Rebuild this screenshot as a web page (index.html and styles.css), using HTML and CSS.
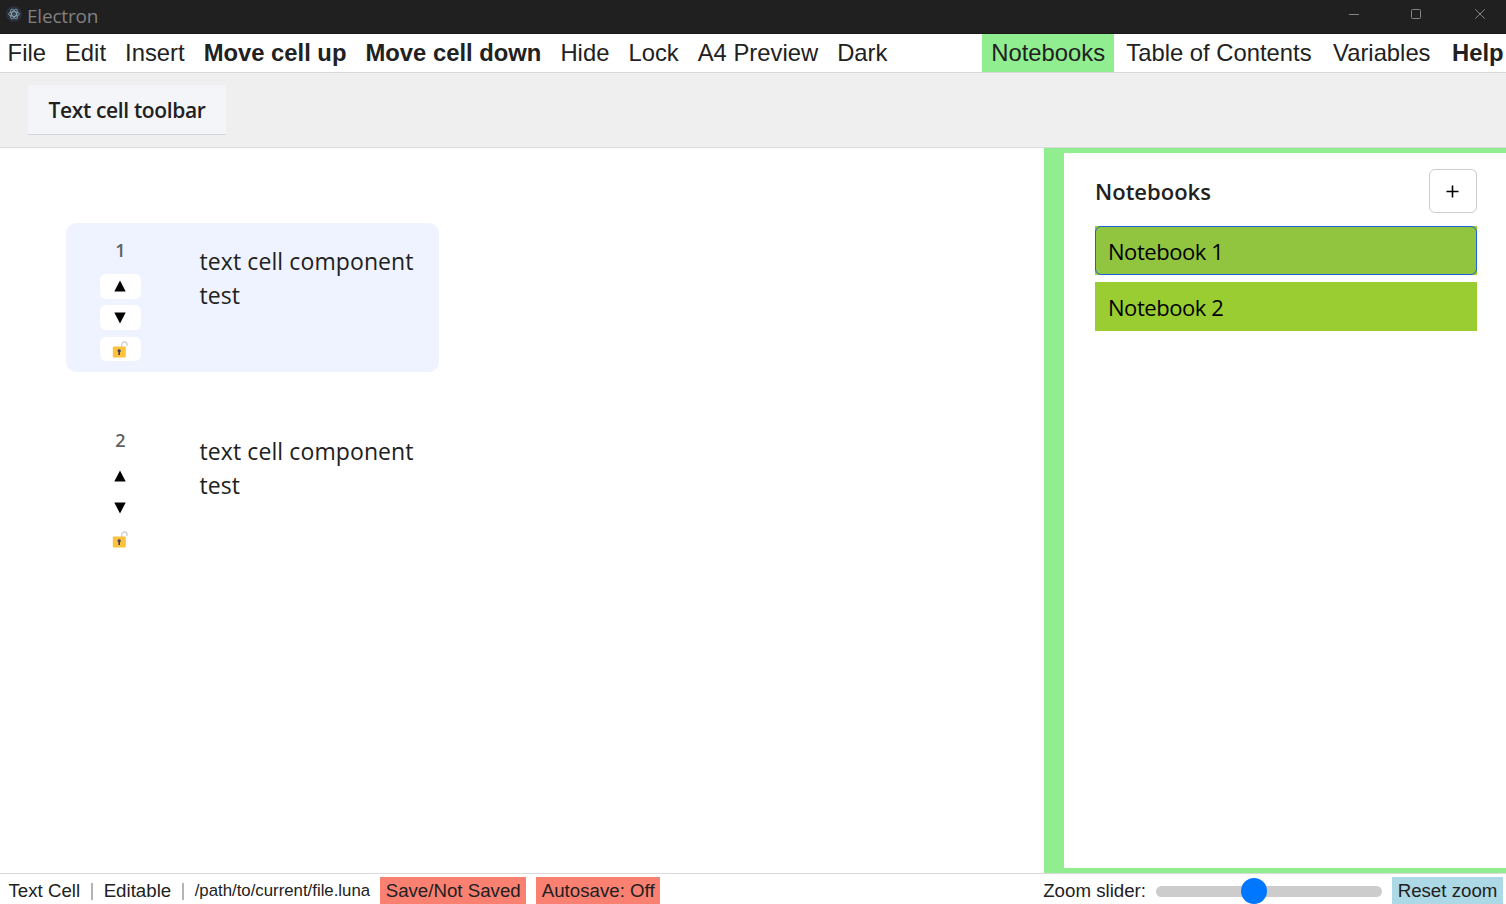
FILE: index.html
```html
<!DOCTYPE html>
<html lang="en">
<head>
<meta charset="utf-8">
<title>Electron</title>
<link rel="stylesheet" href="styles.css">
</head>
<body>
<div class="app">
  <header class="titlebar">
    <svg class="logo" width="16" height="16" viewBox="0 0 16 16">
      <circle cx="8" cy="8" r="8" fill="#2b2e3b"/>
      <g fill="none" stroke="#9fc3cf" stroke-width=".7">
        <ellipse cx="8" cy="8" rx="5.400" ry="2.300"/>
        <ellipse cx="8" cy="8" rx="5.400" ry="2.300" transform="rotate(60 8 8)"/>
        <ellipse cx="8" cy="8" rx="5.400" ry="2.300" transform="rotate(120 8 8)"/>
      </g>
      <circle cx="8" cy="8" r=".5" fill="#9fc3cf"/>
    </svg>
    <span class="app-name">Electron</span>
    <div class="window-controls">
      <svg width="11" height="11" viewBox="0 0 11 11"><path d="M0 5.500h10"/></svg>
      <svg class="maximize" width="11" height="11" viewBox="0 0 11 11"><rect x=".5" y=".5" width="9" height="9" rx="1"/></svg>
      <svg width="11" height="11" viewBox="0 0 11 11"><path d="M.2.2l9.600 9.600M9.800.2L.2 9.800"/></svg>
    </div>
  </header>
  <nav class="menubar">
    <div class="menu-left">
      <span>File</span><span>Edit</span><span>Insert</span><b>Move cell up</b><b>Move cell down</b><span>Hide</span><span>Lock</span><span>A4 Preview</span><span>Dark</span>
    </div>
    <div class="menu-right">
      <span class="active">Notebooks</span><span>Table of Contents</span><span>Variables</span><b>Help</b>
    </div>
  </nav>
  <div class="toolbar"><div class="toolbar-tab"><span>Text cell toolbar</span></div></div>
  <main class="workspace">
    <section class="document">
      <article class="cell selected">
        <div class="cell-controls">
          <span class="cell-number">1</span>
          <button><svg width="12" height="12" viewBox="0 0 12 12"><path d="M6 .5L11.7 11.5H.3z"/></svg></button>
          <button class="down"><svg width="12" height="12" viewBox="0 0 12 12"><path d="M6 11.5L11.7.5H.3z"/></svg></button>
          <button class="lock"><svg width="16" height="17" viewBox="0 0 16 17"><path d="M9.8 6V3.6a2.6 2.6 0 0 1 5.2 0V5" fill="none" stroke="#cfcfcf" stroke-width="1.3"/><rect x=".8" y="5.6" width="13" height="11" rx="1" fill="#fcc23c"/><path d="M7.2 8.2a1.6 1.6 0 0 1 .8 3V14H6.400v-2.800a1.600 1.600 0 0 1 .8-3z" fill="#433b6b"/></svg></button>
        </div>
        <p class="cell-text">text cell component<br>test</p>
      </article>
      <article class="cell">
        <div class="cell-controls">
          <span class="cell-number">2</span>
          <button><svg width="12" height="12" viewBox="0 0 12 12"><path d="M6 .5L11.7 11.5H.3z"/></svg></button>
          <button class="down"><svg width="12" height="12" viewBox="0 0 12 12"><path d="M6 11.5L11.7.5H.3z"/></svg></button>
          <button class="lock"><svg width="16" height="17" viewBox="0 0 16 17"><path d="M9.8 6V3.6a2.6 2.6 0 0 1 5.2 0V5" fill="none" stroke="#cfcfcf" stroke-width="1.3"/><rect x=".8" y="5.6" width="13" height="11" rx="1" fill="#fcc23c"/><path d="M7.2 8.2a1.6 1.6 0 0 1 .8 3V14H6.400v-2.800a1.600 1.600 0 0 1 .8-3z" fill="#433b6b"/></svg></button>
        </div>
        <p class="cell-text">text cell component<br>test</p>
      </article>
    </section>
    <aside class="sidebar">
      <div class="sidebar-head">
        <h2>Notebooks</h2>
        <button class="add"><svg width="13" height="13" viewBox="0 0 13 13"><path d="M6.500.5v12M.5 6.500h12" stroke="#000" stroke-width="1.600"/></svg></button>
      </div>
      <div class="notebook"><div class="notebook-label current">Notebook 1</div></div>
      <div class="notebook"><div class="notebook-label">Notebook 2</div></div>
    </aside>
  </main>
  <footer class="statusbar">
    <span>Text Cell</span><i class="sep"></i><span>Editable</span><i class="sep"></i><span class="path">/path/to/current/file.luna</span>
    <span class="badge save">Save/Not Saved</span><span class="badge autosave">Autosave: Off</span>
    <div class="zoom">
      <span class="zoom-label">Zoom slider:</span>
      <div class="track"><div class="thumb"></div></div>
      <span class="badge reset">Reset zoom</span>
    </div>
  </footer>
</div>
</body>
</html>
```
FILE: styles.css
```css
* { box-sizing: border-box; }
body { margin: 0; color: #212121; background: #fff; font-family: "Liberation Sans", Arial, sans-serif; }
button { border: 0; padding: 0; font: inherit; }
svg { display: block; flex: none; }
.app { width: 1506px; height: 904px; display: flex; flex-direction: column; overflow: hidden; }

.titlebar { height: 34px; flex: none; display: flex; align-items: flex-start; background: #202020; padding: 6px 20px 0 6px; border-bottom: 1px solid #191919; }
.app-name { margin: -3px 0 0 5px; font: 19px/26px "Open Sans", "Noto Sans", sans-serif; letter-spacing: -.2px; color: #808080; }
.window-controls { display: flex; margin: 3px 0 0 auto; gap: 52px; }
.window-controls svg { fill: none; stroke: #858585; stroke-width: 1; }
.window-controls .maximize { margin: 0 1px 0 -1px; }

.menubar { height: 39px; flex: none; display: flex; justify-content: space-between; border-bottom: 1px solid #dadada; font-size: 23.800px; line-height: 38px; white-space: nowrap; }
.menu-left { display: flex; gap: 19.050px; padding-left: 7.600px; }
.menu-right { display: flex; gap: 21.500px; padding-right: 2.400px; }
.active { background: #90ee90; padding: 0 9.400px; margin-right: -9.600px; }

.toolbar { height: 75px; flex: none; padding: 12px 28px; background: #efefef; border-bottom: 1px solid #dadada; }
.toolbar-tab { width: 198px; height: 50px; background: #f3f5f8; border-bottom: 1px solid #cfd6de; text-align: center; font: 600 21px/50px "Open Sans", "Noto Sans", sans-serif; letter-spacing: -.35px; white-space: nowrap; }

.workspace { flex: 1; min-height: 0; display: flex; }
.document { flex: 1; padding: 75px 66px; display: flex; flex-direction: column; gap: 41px; }
.cell { width: 373px; height: 149px; display: flex; padding: 15px 0 0 34px; border-radius: 10px; }
.selected { background: #eef3ff; }
.cell-controls { width: 41px; display: flex; flex-direction: column; gap: 6px; }
.cell-number { height: 30px; font: 600 18px/25px "Open Sans", "Noto Sans", sans-serif; color: #616161; text-align: center; }
.cell-controls button { height: 25px; display: flex; align-items: center; justify-content: center; padding: 0 1px 1px 0; border-radius: 6px; background: #fff; }
.cell-controls .down { padding-bottom: 0; }
.cell-controls .lock { height: 24px; margin-top: 1px; padding-bottom: 0; }
.cell-text { margin: 6px 0 0 58.500px; font: 23px/34px "Open Sans", "Noto Sans", sans-serif; letter-spacing: .1px; white-space: nowrap; }

.sidebar { width: 462px; flex: none; border: solid #90ee90; border-width: 5px 0 5px 20px; padding: 16px 29px 0 31px; font-family: "Open Sans", "Noto Sans", sans-serif; }
.sidebar-head { display: flex; justify-content: space-between; align-items: center; height: 44px; margin-bottom: 13px; }
.sidebar h2 { margin: 0; font-size: 22px; font-weight: 600; }
.add { width: 48px; height: 44px; display: flex; align-items: center; justify-content: center; padding-right: 1px; background: #fff; border: 1px solid #ccc; border-radius: 6px; }
.notebook { height: 49px; margin-bottom: 7px; background: #9acd32; }
.notebook-label { height: 49px; padding-left: 12px; border: 1px solid transparent; border-radius: 6px; color: #000; font-size: 22px; line-height: 49px; letter-spacing: -.45px; }
.current { border-color: #1d62d8; background: #91c540; }

.statusbar { height: 31px; flex: none; display: flex; align-items: flex-start; padding: 3px 3px 0 8.500px; border-top: 1px solid #dadada; font-size: 18.700px; line-height: 27px; white-space: nowrap; }
.sep { width: 2px; height: 17px; margin: 6px 10.500px 0 11px; background: #b4b4b4; }
.path { width: 176.500px; font-size: 16.800px; }
.badge { height: 27px; text-align: center; background: #fa8072; }
.save { width: 146px; margin-left: 9px; }
.autosave { width: 124px; margin-left: 10px; }
.zoom { display: flex; margin-left: auto; }
.track { width: 226px; height: 11px; margin: 9px 10px 0; padding-left: 85px; border-radius: 6px; background: #ccc; }
.thumb { width: 26px; height: 26px; margin-top: -8px; border-radius: 50%; background: #07f; }
.reset { width: 111px; background: #add8e6; }
```
